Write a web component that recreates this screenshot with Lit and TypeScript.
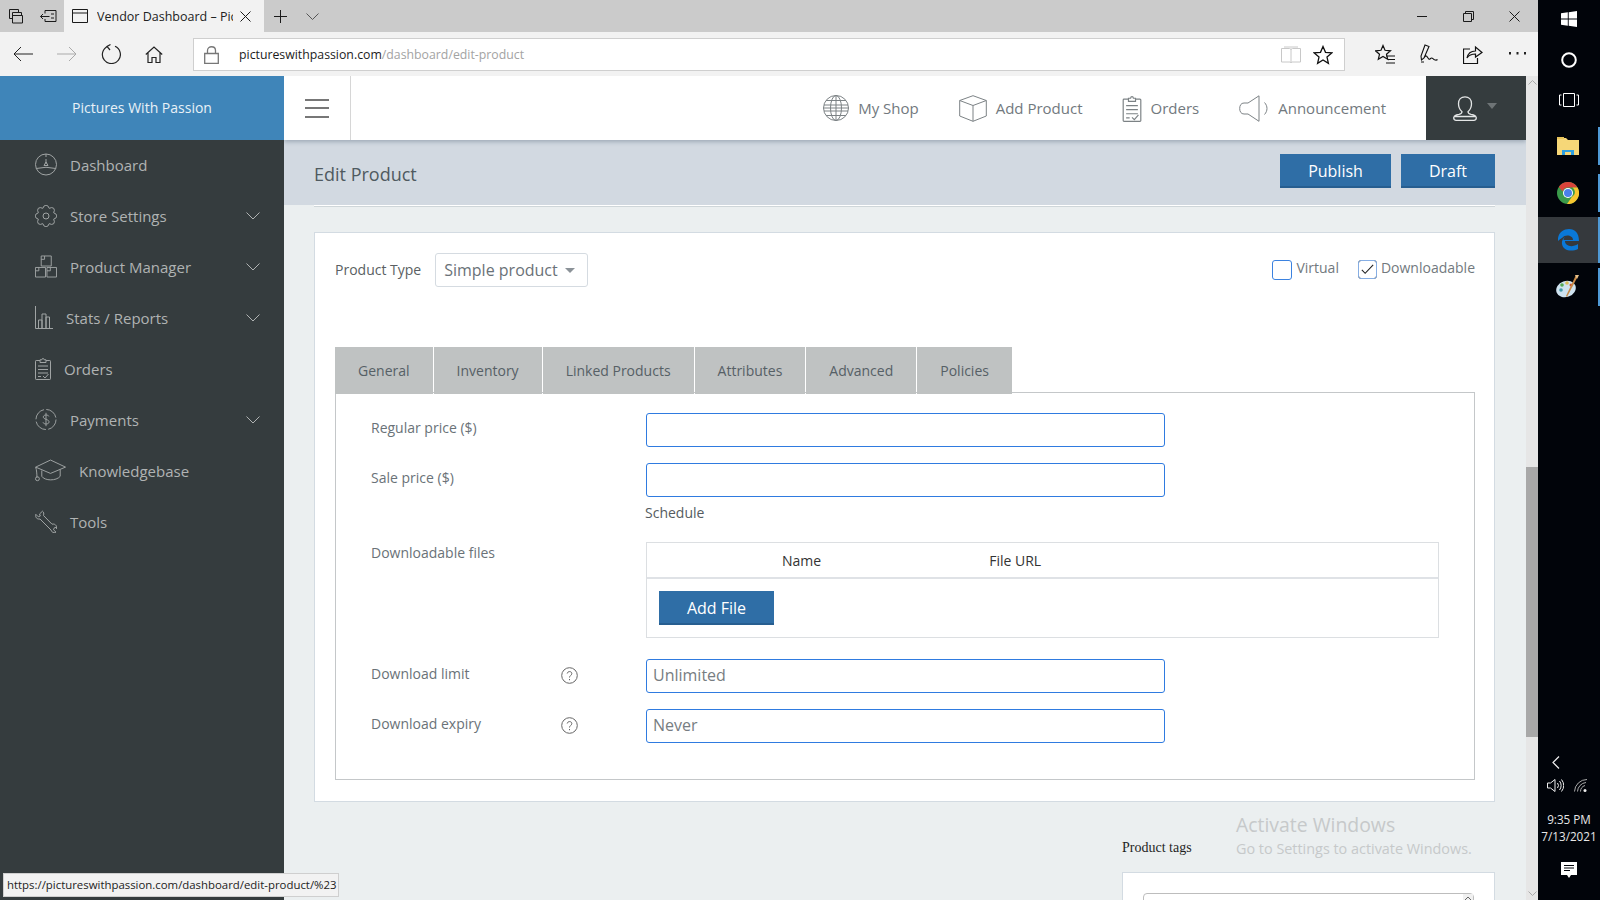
import { LitElement, html, css } from "lit";
import { customElement } from "lit/decorators.js";

const gearPath = (() => {
  const n = 8, cx = 11, cy = 11;
  let d = "";
  for (let i = 0; i < n; i++) {
    const a = (i / n) * Math.PI * 2 - Math.PI / 8;
    const b = ((i + 0.36) / n) * Math.PI * 2 - Math.PI / 8;
    const c = ((i + 0.64) / n) * Math.PI * 2 - Math.PI / 8;
    const e = ((i + 1) / n) * Math.PI * 2 - Math.PI / 8;
    const p = (r: number, t: number) => `${(cx + r * Math.cos(t)).toFixed(2)} ${(cy + r * Math.sin(t)).toFixed(2)}`;
    d += (i === 0 ? `M${p(8.3, a)}` : "") + `L${p(8.3, a)}Q${p(10.9, b - 0.1)} ${p(10.9, (b + c) / 2)}Q${p(10.9, c + 0.1)} ${p(8.3, e)}`;
  }
  return d + "Z";
})();

const clip = html`<svg class="ic" width="16" height="23" viewBox="0 0 16 23"><path d="M5 3.500H1.200a.7.7 0 0 0-.7.7v17.600a.7.7 0 0 0 .7.7h13.600a.7.7 0 0 0 .7-.7V4.200a.7.7 0 0 0-.7-.7H11"/><path d="M5 5.500V2.800h1.800C7 1 9 1 9.200 2.800H11v2.700z"/><path d="M3 9h10M3 12.500h10M3 16h10M3 19.500h3M8 19l2 2 3.500-4"/></svg>`;

const NAV = [
  { t: "Dashboard", c: false, i: html`<svg class="ic" width="22" height="23" viewBox="0 0 22 23"><circle cx="11" cy="11.500" r="10.500"/><path d="M1.200 15.500Q11 13 20.800 15.500M11 1v3M11 6v5M9 12.500h4L11 9z"/></svg>` },
  { t: "Store Settings", c: true, i: html`<svg class="ic" width="22" height="22" viewBox="0 0 22 22"><path d="${gearPath}"/><circle cx="11" cy="11" r="3"/></svg>` },
  { t: "Product Manager", c: true, i: html`<svg class="ic" width="22" height="23" viewBox="0 0 23 23"><path d="M6.500.5h10.500v10.500H6.500zM.5 12.500h10.500V22.500H.5zM12.500 12.500H22.500V22.500H12.500zM6.500 4h3.500V.5M.5 16h3.500v-3.500M12.500 16h3.500v-3.500"/></svg>` },
  { t: "Stats / Reports", c: true, i: html`<svg class="ic" width="18" height="23" viewBox="0 0 18 23"><path d="M.5 0v22.500H18M3.500 22.500V14h3.500v8.500M7 22.500V8h4v14.500M11 22.500V11h3.500v11.500"/></svg>` },
  { t: "Orders", c: false, i: clip },
  { t: "Payments", c: true, i: html`<svg class="ic" width="22" height="23" viewBox="0 0 23 23"><circle cx="11.500" cy="11.500" r="10.500" stroke-dasharray="14 2.500"/><path d="M14.500 8.200C14 6.500 9 6 8.700 8.700c-.3 3 6.300 2.300 6 5.500-.3 2.800-5.800 2.500-6.300.3M11.500 4.500v14"/></svg>` },
  { t: "Knowledgebase", c: false, i: html`<svg class="ic" width="31" height="23" viewBox="0 0 32 23"><path d="M16 .7 31.500 8 16 14.500.7 8zM7 11.500v6c3 4.800 15 5 19 0v-7M.7 8c1 3 1.300 7 1.300 11"/><circle cx="2.500" cy="20" r="2"/></svg>` },
  { t: "Tools", c: false, i: html`<svg class="ic" width="22" height="23" viewBox="0 0 22 23"><path d="M7.500 1.200 4.500 4l.8 2-2 .8-2.500-2.500C.2 7 1.500 9.500 5 9l11 11c.5 2.500 3 3 5 2.200L18.500 19.800l.8-2 2.200-.7 .4 1.900C22 15 19.500 13.500 17 14.200L8.500 5.500C9 3.500 8.800 2 7.500 1.200z"/></svg>` },
];

const help = html`<span class="q"><svg class="ic" width="17" height="17" viewBox="0 0 17 17"><circle cx="8.500" cy="8.500" r="7.800"/><path d="M6.200 6.500C6.500 3.800 11 4 10.800 6.700c-.1 1.800-2.300 1.800-2.300 3.800M8.500 12v1.200"/></svg></span>`;

@customElement("app-root")
export class AppRoot extends LitElement {
  static styles = css`
    :host { display: block; width: 1600px; height: 900px; overflow: hidden; position: relative; font-family: "Open Sans", "Noto Sans", sans-serif; color: #5f6b70; }
    * { box-sizing: border-box; }
    .screen { display: flex; width: 1600px; height: 900px; }
    .browser { width: 1538px; display: flex; flex-direction: column; }
    .tabstrip { height: 32px; background: #cbcbcb; display: flex; align-items: center; color: #1a1a1a; }
    .lefticons { width: 64px; display: flex; gap: 17px; padding-left: 8px; align-items: center; }
    .tab { width: 200px; height: 32px; background: #f2f2f2; display: flex; align-items: center; padding-left: 8px; }
    .tabtitle { width: 136px; margin-left: 9px; overflow: hidden; white-space: nowrap; font-size: 12.5px; color: #222; }
    .tabx { margin-left: 7px; }
    .plus { margin-left: 10px; }
    .chev { margin-left: 19px; }
    .winbtns { margin-left: auto; display: flex; gap: 35px; padding-right: 18px; align-items: center; }
    .toolbar { height: 44px; background: #f2f2f2; display: flex; align-items: center; padding-left: 13px; }
    .navbtns { display: flex; align-items: center; gap: 24px; width: 180px; }
    .addr { width: 1152px; height: 33px; margin-top: 1px; background: #fff; border: 1px solid #cfcfcf; display: flex; align-items: center; padding-left: 10px; }
    .url { margin-left: 20px; font-size: 12.3px; color: #a3a3a3; white-space: nowrap; }
    .url b { font-weight: 400; color: #1c1c1c; }
    .addr-r { margin-left: auto; display: flex; align-items: center; gap: 12px; padding-right: 11px; }
    .tool-r { display: flex; align-items: center; gap: 25px; margin-left: 30px; }
    .page { height: 824px; display: flex; }
    .side { width: 284px; background: #353c3e; flex: none; }
    .brand { height: 64px; background: #3f85b9; color: #e8f1f7; display: flex; align-items: center; justify-content: center; font-size: 14px; padding-bottom: 2px; }
    .nav { display: flex; flex-direction: column; margin-top: -1px; }
    .item { height: 51px; display: flex; align-items: center; gap: 13px; padding: 0 24px 0 35px; color: #b0b3b3; font-size: 15px; }
    .item span { flex: 1; }
    .ic { flex: none; fill: none; stroke: currentColor; stroke-width: 1; display: block; }
    .item .ic { color: #a0a4a4; }
    .main { width: 1242px; background: #ebeff0; display: flex; flex-direction: column; overflow: hidden; }
    .topbar { height: 64px; flex: none; background: #fff; display: flex; box-shadow: 0 2px 4px rgba(70,90,110,.35); position: relative; }
    .burger { width: 67px; border-right: 1px solid #d6d6d6; display: flex; flex-direction: column; justify-content: center; gap: 6.5px; padding-left: 21px; }
    .burger i { display: block; width: 24px; height: 2px; background: #777; }
    .topnav { flex: 1; display: flex; justify-content: flex-end; align-items: center; gap: 40px; padding-right: 40px; font-size: 15px; color: #72797e; }
    .tn { display: flex; align-items: center; gap: 9px; }
    .tn.ord { margin-left: -1px; }
    .tn .ic { color: #7c8285; }
    .user { width: 100px; background: #353c3e; display: flex; align-items: center; padding-left: 27px; gap: 10px; flex: none; }
    .user .ic { color: #e4e6e6; }
    .caret { width: 0; height: 0; border: 5px solid transparent; border-top: 6px solid #6e7476; margin-top: 1px; }
    .titlebar { height: 65px; flex: none; background: #d2d9e1; display: flex; align-items: center; padding: 0 31px 3px 30px; gap: 10px; }
    .titlebar h1 { margin: 5px auto 0 0; font-weight: 400; font-size: 18px; color: #4f5a60; }
    .btn { height: 34px; background: #2f6ea6; border: 0; border-bottom: 2px solid #275e90; color: #fff; font: 400 16px "Open Sans", sans-serif; display: flex; align-items: center; justify-content: center; padding-top: 1px; }
    .publish { width: 111px; } .draft { width: 94px; }
    .addfile { width: 115px; }
    .content { padding: 0 31px 0 30px; display: flex; flex-direction: column; flex: 1; }
    .rule { height: 2px; background: #fff; border-bottom: 1px solid #cfd6d9; flex: none; }
    .card { margin-top: 25px; height: 570px; background: #fff; border: 1px solid #d3dbe2; padding: 20px 19px 0 20px; flex: none; }
    .typerow { display: flex; align-items: center; height: 34px; font-size: 14px; }
    .typelabel { color: #5a5f63; margin-top: -2px; }
    .select { margin-left: 14px; width: 153px; height: 34px; border: 1px solid #d5dbe1; border-radius: 3px; display: flex; align-items: center; padding-left: 8px; font-size: 16px; color: #6a7278; gap: 7px; }
    .selcaret { width: 0; height: 0; border: 5px solid transparent; border-top: 5px solid #8b9298; margin-top: 5px; }
    .checks { margin-left: auto; display: flex; gap: 19px; color: #72797e; align-self: flex-start; margin-top: 5px; }
    .check { display: flex; gap: 4px; align-items: flex-start; line-height: 20px; }
    .box { width: 20px; height: 20px; border: 1.5px solid #3b82e0; border-radius: 3px; display: block; flex: none; margin-top: 2px; }
    .box.on { border-color: #62676b; outline: 1px solid #86aee4; outline-offset: -1px; width: 19px; height: 19px; }
    .tabs { display: flex; gap: 1px; margin-top: 60px; height: 47px; position: relative; }
    .t { background: #bfc2c2; padding: 0 23px; font-size: 14px; display: flex; align-items: center; color: #566066; }
    .panel { margin-top: -2px; height: 388px; border: 1px solid #c4c7c9; padding: 20px 35px 0; }
    .row { display: flex; }
    .row + .row { margin-top: 16px; }
    .lab { width: 275px; flex: none; font-size: 14px; line-height: 20px; padding-top: 5px; color: #6a7278; display: flex; justify-content: space-between; padding-right: 68px; }
    .q { margin-top: 3px; }
    .q .ic { color: #666; }
    .inp { width: 519px; height: 34px; border: 1px solid #2f7be0; border-radius: 3px; padding: 0 6px 2px; font: 400 16px "Open Sans", sans-serif; color: #555; outline: none; background: #fff; }
    .inp::placeholder { color: #777d82; opacity: 1; }
    .sched { margin: 6px 0 0 274px; font-size: 14px; line-height: 20px; color: #555c60; }
    .tablewrap { width: 796px; height: 96px; border: 1px solid #dcdfe2; }
    .thead { height: 36px; display: flex; align-items: center; border-bottom: 2px solid #dfe2e6; font-size: 14px; color: #333; padding-left: 135px; }
    .thead span + span { margin-left: 168px; }
    .tbody { padding: 12px 0 0 12px; }
    .row.dl { margin-top: 19px; }
    .row.dl .lab { padding-top: 1px; }
    .row.lim { margin-top: 21px; }
    .tagwrap { align-self: flex-end; width: 373px; margin-top: 36px; }
    .taglabel { font-family: "Liberation Serif", serif; font-size: 14px; line-height: 20px; color: #1f1f1f; }
    .tagbox { margin-top: 14px; height: 60px; background: #fff; border: 1px solid #d3dbe2; padding: 20px 20px 0; }
    .taginner { height: 40px; border: 1px solid #bdbdbd; border-radius: 4px; display: flex; justify-content: flex-end; }
    .tagscroll { width: 10px; background: #f0f0f0; display: flex; justify-content: center; padding-top: 2px; }
    .scroll { width: 12px; flex: none; background: #e6e6e6; display: flex; flex-direction: column; align-items: center; padding-top: 4px; }
    .thumbgap { height: 382px; flex: none; }
    .thumb { width: 12px; height: 270px; background: #a8a8a8; flex: none; }
    .arrowdn { margin-top: auto; margin-bottom: 4px; }
    .taskbar { width: 62px; background: #01040a; display: flex; flex-direction: column; align-items: center; color: #fff; position: relative; }
    .tb { height: 40px; width: 62px; display: flex; align-items: center; justify-content: center; flex: none; }
    .tb.first { margin-top: -2px; height: 42px; }
    .tb.app { border-right: 2px solid #4f9ad6; height: 38px; margin-bottom: 9px; }
    .tb.app.start { margin-top: 7px; }
    .tb.app.chrome { margin-bottom: 5px; }
    .tb.app.s { height: 46px; margin-bottom: 5px; background: #35393d; }
    .tray { margin-top: auto; display: flex; flex-direction: column; align-items: flex-start; width: 62px; }
    .trayback { margin-left: 14px; }
    .trayicons { display: flex; gap: 10px; margin: 9px 0 0 9px; }
    .clock { width: 62px; font-size: 11.7px; line-height: 17px; text-align: center; margin-top: 18px; color: #e8e8e8; }
    .bubble { margin: 17px 0 22px 23px; }
    .status { position: absolute; left: 3px; top: 873px; width: 336px; height: 24px; background: #f2f2f2; border: 1px solid #cfcfcf; font-size: 11.4px; line-height: 22px; padding-left: 3px; color: #222; white-space: nowrap; }
    .water { position: absolute; left: 1236px; top: 811px; color: #c6c9ca; white-space: nowrap; }
    .water div:first-child { font-size: 19.4px; line-height: 27px; }
    .water div:last-child { font-size: 14.4px; line-height: 21px; }
  `;

  render() {
    return html`
    <div class="screen">
      <div class="browser">
        <div class="tabstrip">
          <div class="lefticons">
            <svg class="ic" width="15" height="15" viewBox="0 0 15 15"><path d="M1.500.5h9v3M1.500.5v9h3M4.500 3.500h9v3M4.500 3.500v10.500h10V6.500h-10"/></svg>
            <svg class="ic" width="17" height="13" viewBox="0 0 17 13"><path d="M5 3.500V.5h11v11H5V9M.5 6.500h9M3 4 .5 6.500 3 9M11 4h3M11 8h3"/></svg>
          </div>
          <div class="tab">
            <svg class="ic" width="16" height="14" viewBox="0 0 16 14"><path d="M.5.5h15v13H.5zM.5 4h15" /></svg>
            <div class="tabtitle">Vendor Dashboard – Pic</div>
            <svg class="ic tabx" width="11" height="11" viewBox="0 0 11 11"><path d="M.5.5l10 10M10.500.5l-10 10"/></svg>
          </div>
          <svg class="ic plus" width="13" height="13" viewBox="0 0 13 13"><path d="M6.500 0v13M0 6.500h13"/></svg>
          <svg class="ic chev" width="13" height="7" viewBox="0 0 13 7"><path d="M.5.5l6 6 6-6" stroke="#555"/></svg>
          <div class="winbtns">
            <svg class="ic" width="11" height="11" viewBox="0 0 11 11"><path d="M0 5.500h10"/></svg>
            <svg class="ic" width="11" height="11" viewBox="0 0 11 11"><path d="M.5 2.500h8v8h-8zM2.500 2.500v-2h8v8h-2"/></svg>
            <svg class="ic" width="11" height="11" viewBox="0 0 11 11"><path d="M.5.5l10 10M10.500.5l-10 10"/></svg>
          </div>
        </div>
        <div class="toolbar">
          <div class="navbtns">
            <svg class="ic" width="20" height="16" viewBox="0 0 20 16"><path d="M20 8H1M8 1 1 8l7 7" stroke="#222"/></svg>
            <svg class="ic" width="20" height="16" viewBox="0 0 20 16"><path d="M0 8h19M12 1l7 7-7 7" stroke="#aaa"/></svg>
            <svg class="ic" width="20" height="20" viewBox="0 0 20 20"><path d="M7 2.200A9 9 0 1 0 14 2.300M9.500 .5 6 2.500 9 6" stroke="#222" stroke-width="1.200"/></svg>
            <svg class="ic" width="18" height="17" viewBox="0 0 18 17"><path d="M.8 8.500 9 1l8.200 7.500M3 7v9.500h4v-5h4v5h4V7" stroke="#222" stroke-width="1.200"/></svg>
          </div>
          <div class="addr">
            <svg class="ic" width="15" height="18" viewBox="0 0 15 18"><path d="M.7 7.500h13.600v10H.7zM3.500 7.500V4.500c0-5 8-5 8 0v3" stroke="#777" stroke-width="1.300"/></svg>
            <div class="url"><b>pictureswithpassion.com</b>/dashboard/edit-product</div>
            <div class="addr-r">
              <svg class="ic" width="20" height="18" viewBox="0 0 20 18"><path d="M.5 2.500h8c1 0 1.500.5 1.500 1.500 0-1 .5-1.500 1.500-1.500h8V16H11c-.5 0-1 .5-1 1 0-.5-.5-1-1-1H.5zM10 4v13M3 1h14" stroke="#c8c8c8"/></svg>
              <svg class="ic" width="20" height="20" viewBox="0 0 20 20"><path d="M10 1.500l2.500 5.800 6.300.6-4.800 4.200 1.400 6.200-5.400-3.300-5.400 3.300 1.400-6.200L1.200 7.900l6.300-.6z" stroke="#111" stroke-width="1.300"/></svg>
            </div>
          </div>
          <div class="tool-r">
            <svg class="ic" width="20" height="20" viewBox="0 0 20 20"><path d="M8 1.500l2 4.800 5.500.5-4 3.500 1.200 5-4.700-2.800-4.700 2.800 1.200-5-4-3.500 5.500-.5zM11 12h9M13 15.500h7M11 19h9" stroke="#111" stroke-width="1.200"/></svg>
            <svg class="ic" width="18" height="20" viewBox="0 0 18 20"><path d="M5 1 9 2.500 4 14l-2.500 2L1 12zM4 14c3-6 4 3 6 1s2-1 4 .5c1 .5 3 .5 3.500 0M1 18h3" stroke="#111" stroke-width="1.100"/></svg>
            <svg class="ic" width="20" height="19" viewBox="0 0 20 19"><path d="M7 4H.5v14.500h14V13M4 13c1-5 4-7 8.500-7V2L19 7.500 12.500 12V9C9 9 6 10 4 13z" stroke="#111" stroke-width="1.200"/></svg>
            <svg class="ic" width="19" height="4" viewBox="0 0 19 4"><path d="M1 0h2v2.500H1zM8.500 0h2v2.500h-2zM16 0h2v2.500h-2z" fill="#222" stroke="none"/></svg>
          </div>
        </div>
        <div class="page">
          <aside class="side">
            <div class="brand">Pictures With Passion</div>
            <nav class="nav">
              ${NAV.map((n) => html`<div class="item">${n.i}<span>${n.t}</span>${n.c ? html`<svg class="ic" width="14" height="8" viewBox="0 0 14 8"><path d="M.5.5 7 7 13.500.5" stroke="#b0b3b3"/></svg>` : ""}</div>`)}
            </nav>
          </aside>
          <div class="main">
            <header class="topbar">
              <div class="burger"><i></i><i></i><i></i></div>
              <div class="topnav">
                <div class="tn"><svg class="ic" width="26" height="26" viewBox="0 0 26 26"><circle cx="13" cy="13" r="12.500"/><ellipse cx="13" cy="13" rx="5.500" ry="12.500"/><path d="M13 .5v25M3 5.500h20M1 10h24M.5 13h25M1 16h24M3 20.500h20"/></svg><span>My Shop</span></div>
                <div class="tn"><svg class="ic" width="28" height="27" viewBox="0 0 28 27"><path d="M14 .7 27.300 5.500V21L14 26.300.7 21V5.500zM.7 5.500 14 10.500 27.300 5.500M14 10.500v15.800"/></svg><span>Add Product</span></div>
                <div class="tn ord"><svg class="ic" width="20" height="27" viewBox="0 0 16 23"><path d="M5 3.500H1.200a.7.7 0 0 0-.7.7v17.600a.7.7 0 0 0 .7.7h13.600a.7.7 0 0 0 .7-.7V4.200a.7.7 0 0 0-.7-.7H11"/><path d="M5 5.500V2.800h1.800C7 1 9 1 9.200 2.800H11v2.700z"/><path d="M3 9h10M3 12.500h10M3 16h10M3 19.500h3M8 19l2 2 3.500-4"/></svg><span>Orders</span></div>
                <div class="tn"><svg class="ic" width="30" height="27" viewBox="0 0 30 27"><path d="M20 .8V26.300L9 19H5C2 19 .7 16.500 .7 13.500S2 8 5 8h4z"/><path d="M25.500 7.500c3.300 3.500 3.300 8.500 0 12" /></svg><span>Announcement</span></div>
              </div>
              <div class="user">
                <svg class="ic" width="24" height="25" viewBox="0 0 24 25"><path d="M12 .8c-4 0-6.500 3-6.500 7 0 3 1.300 6 3.500 8 0 1.500-.5 2-3 2.500-3 .5-5.300 1-5.300 3.500 0 1.500.8 2.500 2.500 2.500h17.600c1.700 0 2.500-1 2.500-2.500 0-2.500-2.300-3-5.300-3.500-2.500-.5-3-1-3-2.500 2.200-2 3.500-5 3.500-8 0-4-2.500-7-6.500-7zM.8 20.500h22.400" stroke-width="1.300"/></svg>
                <i class="caret"></i>
              </div>
            </header>
            <div class="titlebar">
              <h1>Edit Product</h1>
              <div class="btn publish">Publish</div>
              <div class="btn draft">Draft</div>
            </div>
            <div class="content">
              <div class="rule"></div>
              <section class="card">
                <div class="typerow">
                  <span class="typelabel">Product Type</span>
                  <div class="select">Simple product<i class="selcaret"></i></div>
                  <div class="checks">
                    <label class="check"><i class="box"></i>Virtual</label>
                    <label class="check"><svg class="box on ic" viewBox="0 0 18 18"><path d="M3 9.500l3.500 3.500L15 4" stroke="#222" stroke-width="1.200"/></svg>Downloadable</label>
                  </div>
                </div>
                <div class="tabs">
                  <div class="t">General</div><div class="t">Inventory</div><div class="t">Linked Products</div><div class="t">Attributes</div><div class="t">Advanced</div><div class="t">Policies</div>
                </div>
                <div class="panel">
                  <div class="row"><div class="lab">Regular price ($)</div><input class="inp" /></div>
                  <div class="row"><div class="lab">Sale price ($)</div><input class="inp" /></div>
                  <div class="sched">Schedule</div>
                  <div class="row dl"><div class="lab">Downloadable files</div>
                    <div class="tablewrap">
                      <div class="thead"><span>Name</span><span>File URL</span></div>
                      <div class="tbody"><div class="btn addfile">Add File</div></div>
                    </div>
                  </div>
                  <div class="row lim"><div class="lab">Download limit${help}</div><input class="inp" placeholder="Unlimited" /></div>
                  <div class="row"><div class="lab">Download expiry${help}</div><input class="inp" placeholder="Never" /></div>
                </div>
              </section>
              <div class="tagwrap">
                <div class="taglabel">Product tags</div>
                <div class="tagbox"><div class="taginner"><div class="tagscroll"><svg class="ic" width="8" height="5" viewBox="0 0 8 5"><path d="M.5 4.500 4 1l3.500 3.500" stroke="#666"/></svg></div></div></div>
              </div>
            </div>
          </div>
          <div class="scroll">
            <svg class="ic" width="9" height="5" viewBox="0 0 9 5"><path d="M.5 4.500 4.500.5l4 4" stroke="#aaa"/></svg>
            <div class="thumbgap"></div>
            <div class="thumb"></div>
            <svg class="ic arrowdn" width="9" height="5" viewBox="0 0 9 5"><path d="M.5.5l4 4 4-4" stroke="#aaa"/></svg>
          </div>
        </div>
      </div>
      <div class="taskbar">
        <div class="tb first"><svg width="16" height="16" viewBox="0 0 16 16"><path d="M0 2.300 6.800 1.300V7.500H0zM7.700 1.200 16 0V7.500H7.700zM0 8.400H6.800V14.700L0 13.700zM7.700 8.400H16V16L7.700 14.800z" fill="#fff"/></svg></div>
        <div class="tb"><svg width="16" height="16" viewBox="0 0 16 16"><circle cx="8" cy="8" r="6.800" fill="none" stroke="#fff" stroke-width="2"/></svg></div>
        <div class="tb"><svg width="20" height="14" viewBox="0 0 20 14" fill="none" stroke="#fff"><path d="M4.500.5h11v13h-11zM2.500 2H.5v10h2M17.500 2h2v10h-2"/></svg></div>
        <div class="tb app start"><svg width="22" height="18" viewBox="0 0 22 18"><path d="M0 1h9l2 2h11v15H0z" fill="#f6d778"/><path d="M0 0h7v2H0z" fill="#e8c45a"/><path d="M5 13h12v5h-3v-3H8v3H5z" fill="#2d9fe0"/></svg></div>
        <div class="tb app chrome"><svg width="22" height="22" viewBox="0 0 22 22"><circle cx="11" cy="11" r="11" fill="#3a9a4a"/><path d="M11 0a11 11 0 0 1 9.500 5.500H11a5.500 5.500 0 0 0-5.300 4L1.800 5A11 11 0 0 1 11 0z" fill="#d9433a"/><path d="M20.500 5.500A11 11 0 0 1 10 22l4.800-7a5.500 5.500 0 0 0 .6-9.500z" fill="#f7c62f"/><circle cx="11" cy="11" r="5" fill="#fff"/><circle cx="11" cy="11" r="4" fill="#4a80e8"/></svg></div>
        <div class="tb app s"><svg width="21" height="22" viewBox="0 0 21 22"><path d="M0 9C1 3 6 0 11 0c6 0 10 4 10 12H7c0 5 7 7 13 3v5c-6 3-15 2-16-5-.5-3 1-6 3-7-1 1-1.500 2-1.500 3H15c0-5-8-6-11-2-1 .5-3 2-4 3z" fill="#0a78d7"/></svg></div>
        <div class="tb app"><svg width="24" height="24" viewBox="0 0 24 24"><ellipse cx="10" cy="14" rx="10" ry="8" fill="#cfe3f0" transform="rotate(-20 10 14)"/><circle cx="5" cy="15" r="1.800" fill="#49a"/><circle cx="6" cy="10" r="1.800" fill="#5a5"/><circle cx="11" cy="8" r="1.800" fill="#db5"/><circle cx="15" cy="10" r="1.500" fill="#c53"/><path d="M22 1 11 22l-1-1L20 0z" fill="#c98a45"/><path d="M19 0h4l-2 4z" fill="#e8c08a"/></svg></div>
        <div class="tray">
          <svg class="trayback" width="8" height="13" viewBox="0 0 8 13" fill="none" stroke="#eee" stroke-width="1.200"><path d="M7 .5 1 6.500l6 6"/></svg>
          <div class="trayicons">
            <svg width="17" height="15" viewBox="0 0 17 14" fill="none" stroke="#eee"><path d="M.5 4.500h3L8 1v12L3.500 9.500h-3zM10.500 4.500a4 4 0 0 1 0 5M12.500 2.500a7 7 0 0 1 0 9M14.500 1a10 10 0 0 1 0 12"/></svg>
            <svg width="15" height="15" viewBox="0 0 15 14" fill="none" stroke="#aaa"><path d="M.5 13A12.500 12.500 0 0 1 13 1M3.500 13A9.500 9.500 0 0 1 12 4M6.500 13A6.500 6.500 0 0 1 11 7"/><circle cx="11" cy="12" r="1.500" fill="#eee" stroke="none"/></svg>
          </div>
          <div class="clock">9:35 PM<br />7/13/2021</div>
          <svg class="bubble" width="16" height="16" viewBox="0 0 16 16"><path d="M0 0h16v13h-6l-2 3-2-3H0z" fill="#fff"/><path d="M3 3.500h10M3 6h10M3 8.500h6" stroke="#01040a"/></svg>
        </div>
      </div>
    </div>
    <div class="status">https://pictureswithpassion.com/dashboard/edit-product/%23</div>
    <div class="water"><div>Activate Windows</div><div>Go to Settings to activate Windows.</div></div>
    `;
  }
}
